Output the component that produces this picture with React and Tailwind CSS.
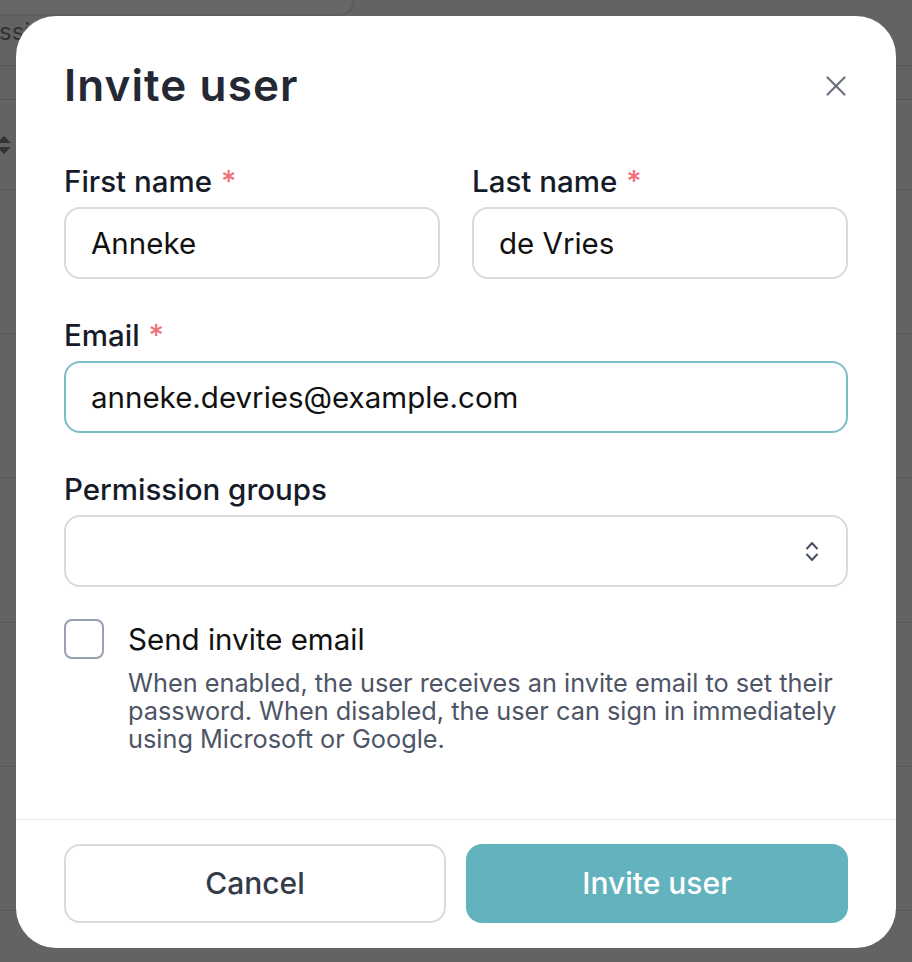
import React from 'react';

const font = "font-['Inter',sans-serif]";

function Label({ children, required }) {
  return (
    <label className="mb-[6px] block text-[29.5px] font-medium leading-[40px] text-[#151b28]">
      {children}
      {required && <span className="ml-[9px] text-[#f0707a]">*</span>}
    </label>
  );
}

function TextInput({ value, focused }) {
  return (
    <div
      className={`flex h-[72px] items-center rounded-[16px] border-2 px-[25px] text-[29.5px] text-[#111111] ${
        focused ? 'border-[#7dbdc8]' : 'border-[#d9dadf]'
      }`}
    >
      {value}
    </div>
  );
}

function BackgroundPage() {
  // table behind the overlay, only the left strip shows
  return (
    <div className="flex h-[962px] w-[912px] flex-col overflow-hidden bg-[#636363]">
      <div className="h-[66px] border-b border-[#585858]">
        <div className="h-[16px] w-[354px] rounded-br-[14px] border-r-2 border-b-2 border-[#5b5b5b] bg-[#666666]" />
        <div className="-ml-[1px] pt-[2px] text-[24px] leading-[28px] text-[#333333]">ssions</div>
      </div>
      <div className="h-[34px] border-b border-[#585858] bg-[#626262]" />
      <div className="flex h-[90px] items-center border-b border-[#585858]">
        <svg width="16" height="20" viewBox="0 0 16 20" className="-ml-[4px]">
          <path d="M8 1 L15 8 L1 8 Z" fill="#333" />
          <path d="M8 19 L15 12 L1 12 Z" fill="#333" />
        </svg>
      </div>
      <div className="h-[144px] shrink-0 border-b border-[#585858]" />
      <div className="h-[144px] shrink-0 border-b border-[#585858]" />
      <div className="h-[145px] shrink-0 border-b border-[#585858]" />
      <div className="h-[144px] shrink-0 border-b border-[#585858]" />
      <div className="h-[144px] shrink-0 border-b border-[#585858]" />
    </div>
  );
}

export default function App() {
  return (
    <div className={`relative h-[962px] w-[912px] overflow-hidden ${font}`}>
      <BackgroundPage />

      {/* modal */}
      <div className="absolute inset-0 px-4 pt-4 pb-[14px]">
        <div className="flex h-full flex-col rounded-[40px] bg-white">
          <div className="flex-1 px-12 pt-12">
            <div className="flex items-center justify-between">
              <h2 className="text-[44px] font-semibold leading-[42px] tracking-[1.1px] text-[#232833]">Invite user</h2>
              <button className="mr-[2px] mt-[2px]" aria-label="Close">
                <svg width="20" height="20" viewBox="0 0 20 20" fill="none" stroke="#6b7080" strokeWidth="2.2" strokeLinecap="round">
                  <path d="M1.5 1.5 L18.5 18.5" />
                  <path d="M18.5 1.5 L1.5 18.5" />
                </svg>
              </button>
            </div>

            <div className="mt-[55px] grid grid-cols-2 gap-x-8">
              <div>
                <Label required>First name</Label>
                <TextInput value="Anneke" />
              </div>
              <div>
                <Label required>Last name</Label>
                <TextInput value="de Vries" />
              </div>
            </div>

            <div className="mt-[36px]">
              <Label required>Email</Label>
              <TextInput value="anneke.devries@example.com" focused />
            </div>

            <div className="mt-[36px]">
              <Label>Permission groups</Label>
              <div className="flex h-[72px] items-center justify-end rounded-[16px] border-2 border-[#d9dadf] pr-[28px]">
                <svg width="12" height="21" viewBox="0 0 12 21" fill="none" stroke="#4a5263" strokeWidth="2" strokeLinecap="round" strokeLinejoin="round">
                  <path d="M1 7.5 L6 2 L11 7.5" />
                  <path d="M1 13.5 L6 19 L11 13.5" />
                </svg>
              </div>
            </div>

            <div className="mt-[32px] flex gap-6">
              <div className="h-[40px] w-[40px] shrink-0 rounded-[8px] border-2 border-[#97a0b0]" />
              <div>
                <div className="text-[29.5px] leading-[40px] text-[#111111]">Send invite email</div>
                <p className="mt-[10px] text-[25.3px] leading-[28px] text-[#4d5566]">
                  When enabled, the user receives an invite email to set their
                  <br />
                  password. When disabled, the user can sign in immediately
                  <br />
                  using Microsoft or Google.
                </p>
              </div>
            </div>
          </div>

          <div className="grid grid-cols-2 gap-5 border-t border-[#ececee] px-12 pt-6 pb-[25px]">
            <button className="h-[79px] rounded-[16px] border-2 border-[#d9dadf] bg-white text-[30px] font-medium text-[#343b4b]">
              Cancel
            </button>
            <button className="h-[79px] rounded-[16px] bg-[#62b3bd] text-[30px] font-medium text-white">
              Invite user
            </button>
          </div>
        </div>
      </div>
    </div>
  );
}
